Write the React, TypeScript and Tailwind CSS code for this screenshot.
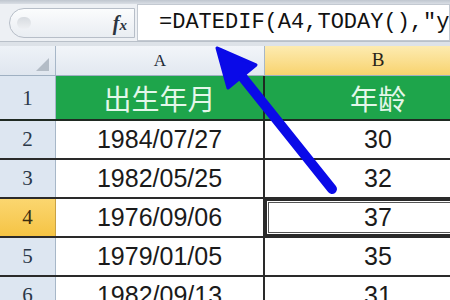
const rows = [
  { n: "2", date: "1984/07/27", age: "30" },
  { n: "3", date: "1982/05/25", age: "32" },
  { n: "4", date: "1976/09/06", age: "37", active: true },
  { n: "5", date: "1979/01/05", age: "35" },
  { n: "6", date: "1982/09/13", age: "31" },
];

const App = () => {
  return (
    <div className="relative w-[450px] h-[300px] overflow-hidden bg-white">
      {/* Top strip */}
      <div className="h-[4px] bg-gradient-to-b from-[#bfc6cf] to-[#d9dee5]" />

      {/* Formula bar */}
      <div className="flex h-[37px] bg-[#edf0f4]">
        <div className="flex shrink-0 items-center pl-[9px] pr-[2px] w-[137px]">
          <div className="flex h-[30px] w-full items-center justify-between rounded-l-full border border-[#b7bec8] bg-gradient-to-b from-[#fbfcfd] to-[#e9edf2] pl-[7px] pr-[7px]">
            <span className="h-[12px] w-[14px] rounded-full bg-gradient-to-b from-[#d7dbe0] to-[#eef0f3]" />
            <span className="text-[20px] italic font-bold leading-none text-[#2b3440] [font-family:'Liberation_Serif',serif]">
              f<span className="text-[15px]">x</span>
            </span>
          </div>
        </div>
        <div className="flex flex-1 items-center overflow-hidden border border-[#c3c9d1] bg-white pl-[21px] text-[22px] leading-none text-[#111] whitespace-nowrap [font-family:'Liberation_Mono',monospace]">
          =DATEDIF(A4,TODAY(),"y"
        </div>
      </div>

      {/* Separator */}
      <div className="h-[5px] border-t border-[#b9c0c9] bg-[#dde2e8]" />

      {/* Column headers */}
      <div className="flex h-[30px] border-b border-[#9fb0c2]">
        <div className="relative w-[56px] shrink-0 border-r border-[#a7b7c8] bg-gradient-to-b from-[#eef2f7] to-[#dfe6ef]">
          <svg className="absolute right-[6px] bottom-[4px]" width="13" height="13" viewBox="0 0 13 13">
            <polygon points="13,0 13,13 0,13" fill="#b3bcc6" />
          </svg>
        </div>
        <div className="flex w-[209px] shrink-0 items-center justify-center border-r border-[#a7b7c8] bg-gradient-to-b from-[#f2f5f9] to-[#e2e8f0] text-[17px] text-[#1e2a36] [font-family:'Liberation_Serif',serif]">
          A
        </div>
        <div className="flex w-[226px] shrink-0 items-center justify-center bg-gradient-to-b from-[#fdebb0] to-[#f8d36d] text-[19px] text-[#2a2418] [font-family:'Liberation_Serif',serif]">
          B
        </div>
      </div>

      {/* Row 1 */}
      <div className="flex h-[45px] border-b-2 border-[#1f2a22]">
        <div className="flex w-[56px] shrink-0 items-end justify-center border-r border-[#a7b7c8] bg-[#dde6f1] pb-[5px] text-[21px] text-[#2b3848] [font-family:'Liberation_Serif',serif]">
          1
        </div>
        <div className="flex w-[209px] shrink-0 items-center justify-center border-r-2 border-[#1e2a22] bg-[#1ea54b] text-[28px] text-[#e4f7ea] [font-family:'Noto_Sans_CJK_SC',sans-serif]">
          出生年月
        </div>
        <div className="flex w-[226px] shrink-0 items-center justify-center bg-[#1ea54b] text-[28px] text-[#e4f7ea] [font-family:'Noto_Sans_CJK_SC',sans-serif]">
          年龄
        </div>
      </div>

      {/* Data rows */}
      {rows.map((r) => (
        <div key={r.n} className="flex h-[39px] border-b-2 border-[#2a2a2a]">
          <div
            className={
              r.active
                ? "flex w-[56px] shrink-0 items-end justify-center border-r border-[#c9a244] bg-gradient-to-b from-[#fbd66f] to-[#f5c443] pb-[3px] text-[21px] text-[#3a2c10] [font-family:'Liberation_Serif',serif]"
                : "flex w-[56px] shrink-0 items-end justify-center border-r border-[#a7b7c8] bg-[#dde6f1] pb-[3px] text-[21px] text-[#2b3848] [font-family:'Liberation_Serif',serif]"
            }
          >
            {r.n}
          </div>
          <div className="flex w-[209px] shrink-0 items-center justify-center border-r-2 border-[#2a2a2a] text-[25px] text-[#1a1a1a] [font-family:'Liberation_Sans',sans-serif]">
            {r.date}
          </div>
          <div
            className={
              r.active
                ? "flex w-[226px] shrink-0 items-center justify-center text-[25px] text-[#1a1a1a] shadow-[inset_0_0_0_2px_#2a2a2a,inset_0_0_0_3px_#fff,inset_0_0_0_4px_#555] [font-family:'Liberation_Sans',sans-serif]"
                : "flex w-[226px] shrink-0 items-center justify-center text-[25px] text-[#1a1a1a] [font-family:'Liberation_Sans',sans-serif]"
            }
          >
            {r.age}
          </div>
        </div>
      ))}

      {/* Blue arrow */}
      <svg className="absolute inset-0 pointer-events-none" width="450" height="300" viewBox="0 0 450 300">
        <line x1="240" y1="74" x2="332" y2="189" stroke="#0a0ae8" strokeWidth="10" strokeLinecap="round" />
        <polygon points="217,48 256,65 228,88" fill="#0a0ae8" stroke="#0a0ae8" strokeWidth="3" strokeLinejoin="round" />
      </svg>
    </div>
  );
};

export default App;
